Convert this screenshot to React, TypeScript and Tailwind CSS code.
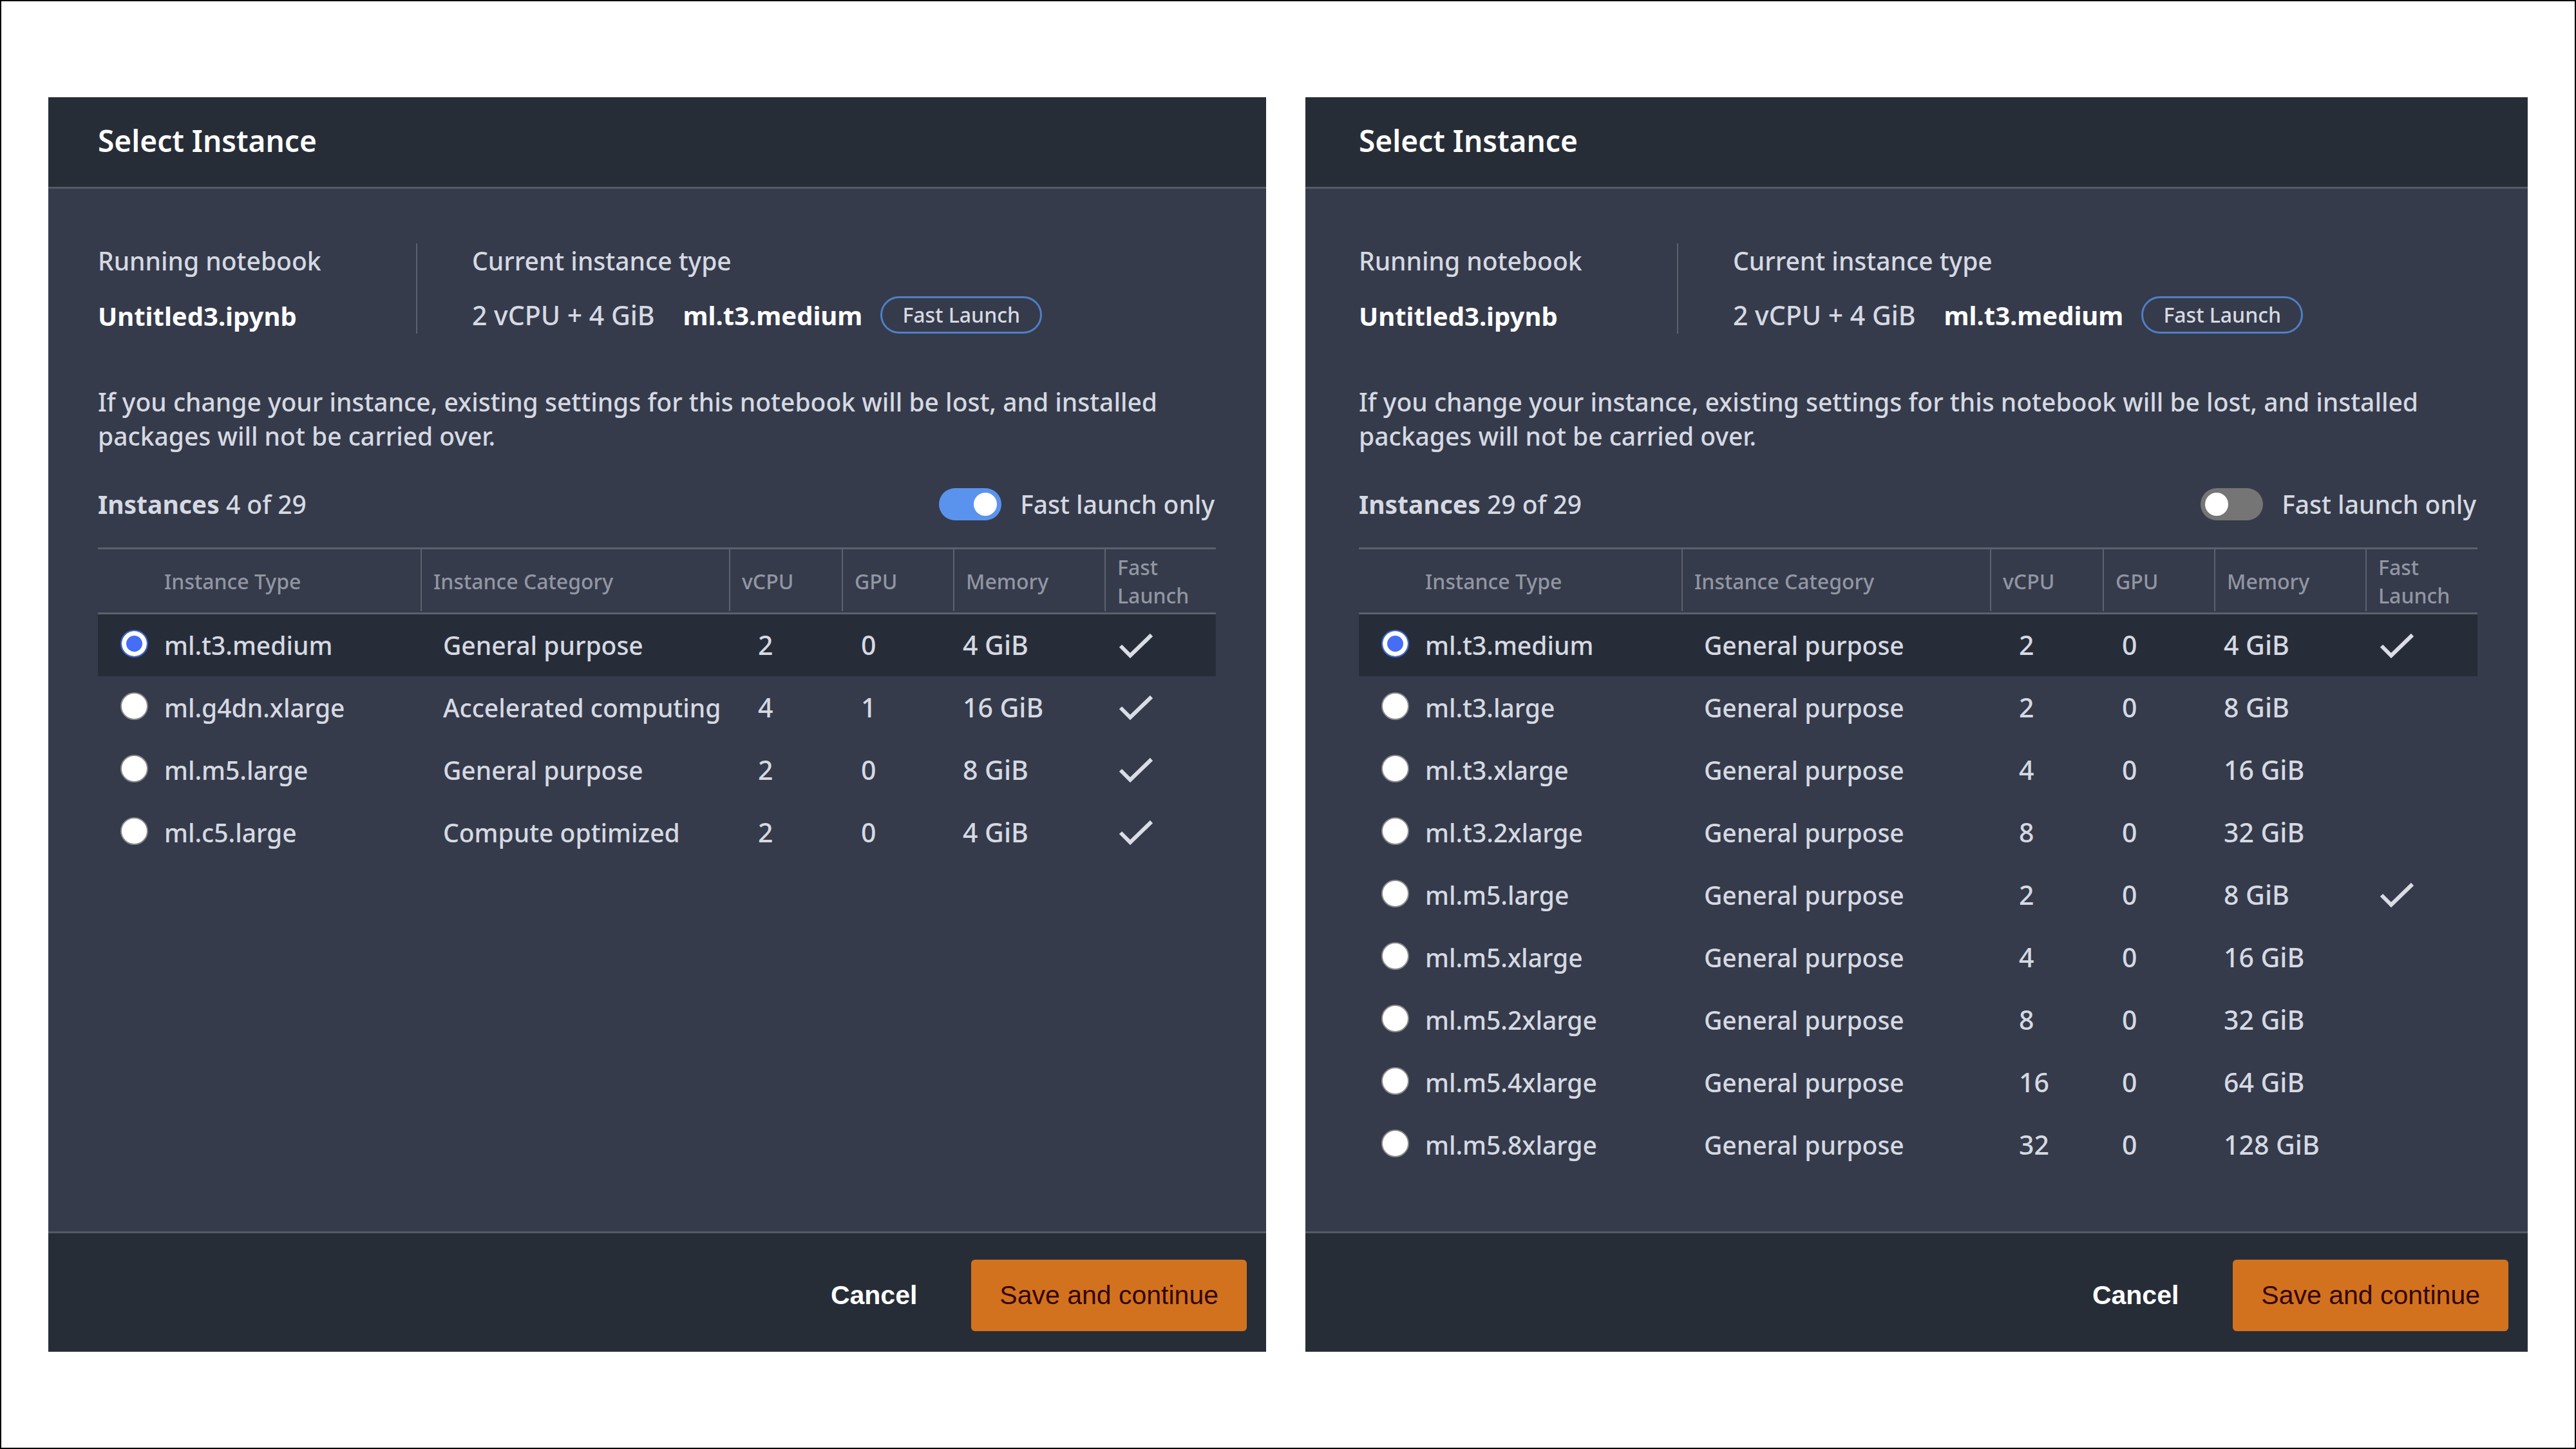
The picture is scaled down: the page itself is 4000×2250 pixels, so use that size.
import { useId, useState } from "react";

type Instance = {
  type: string;
  category: string;
  vcpu: number;
  gpu: number;
  memory: string;
  fast?: boolean;
};

const fastInstances: Instance[] = [
  { type: "ml.t3.medium", category: "General purpose", vcpu: 2, gpu: 0, memory: "4 GiB", fast: true },
  { type: "ml.g4dn.xlarge", category: "Accelerated computing", vcpu: 4, gpu: 1, memory: "16 GiB", fast: true },
  { type: "ml.m5.large", category: "General purpose", vcpu: 2, gpu: 0, memory: "8 GiB", fast: true },
  { type: "ml.c5.large", category: "Compute optimized", vcpu: 2, gpu: 0, memory: "4 GiB", fast: true },
];

const allInstances: Instance[] = [
  { type: "ml.t3.medium", category: "General purpose", vcpu: 2, gpu: 0, memory: "4 GiB", fast: true },
  { type: "ml.t3.large", category: "General purpose", vcpu: 2, gpu: 0, memory: "8 GiB" },
  { type: "ml.t3.xlarge", category: "General purpose", vcpu: 4, gpu: 0, memory: "16 GiB" },
  { type: "ml.t3.2xlarge", category: "General purpose", vcpu: 8, gpu: 0, memory: "32 GiB" },
  { type: "ml.m5.large", category: "General purpose", vcpu: 2, gpu: 0, memory: "8 GiB", fast: true },
  { type: "ml.m5.xlarge", category: "General purpose", vcpu: 4, gpu: 0, memory: "16 GiB" },
  { type: "ml.m5.2xlarge", category: "General purpose", vcpu: 8, gpu: 0, memory: "32 GiB" },
  { type: "ml.m5.4xlarge", category: "General purpose", vcpu: 16, gpu: 0, memory: "64 GiB" },
  { type: "ml.m5.8xlarge", category: "General purpose", vcpu: 32, gpu: 0, memory: "128 GiB" },
];

const headings = ["Instance Category", "vCPU", "GPU", "Memory", "Fast Launch"];

function CheckMark() {
  return (
    <svg className="h-10 w-[54px]" viewBox="0 0 54 40" fill="none" role="img" aria-label="Yes">
      <path d="M3 21 L18 36 L51 4" stroke="#dadde6" strokeWidth="6" />
    </svg>
  );
}

function InstanceTable({ rows }: { rows: Instance[] }) {
  const group = useId();
  const [selected, setSelected] = useState(rows[0].type);

  return (
    <table className="w-full table-fixed border-collapse text-left">
      <colgroup>
        <col className="w-[501px]" />
        <col className="w-[479px]" />
        <col className="w-[175px]" />
        <col className="w-[173px]" />
        <col className="w-[235px]" />
        <col />
      </colgroup>
      <thead className="border-y-3 border-[#5d616c] text-[32px] leading-[44px] text-[#9296a2]">
        <tr>
          <th scope="col" className="p-0 pt-0.5 pl-[103px] font-medium">
            Instance Type
          </th>
          {headings.map((heading) => (
            <th key={heading} scope="col" className="p-0 pb-0.5 font-medium">
              <div className="flex h-24 items-center border-l-2 border-[#5d616c] pt-1 pr-6 pl-[18px]">{heading}</div>
            </th>
          ))}
        </tr>
      </thead>
      <tbody className="text-[39px] leading-[53px] font-medium text-[#d6d9e2]">
        {rows.map((row) => (
          <tr key={row.type} className={row.type === selected ? "h-[97px] bg-[#272d38]" : "h-[97px]"}>
            <td className="p-0 pl-[35px]">
              <label className="flex items-center gap-[25px]">
                <input
                  type="radio"
                  name={group}
                  checked={row.type === selected}
                  onChange={() => setSelected(row.type)}
                  className="mb-1 size-[43px] shrink-0 appearance-none rounded-full border-2 border-[#8b8b8b] bg-white checked:border-[#3f66cf] checked:bg-[#456df5] checked:shadow-[inset_0_0_0_7px_#ffffff]"
                />
                {row.type}
              </label>
            </td>
            <td className="p-0 pl-[35px] whitespace-nowrap">{row.category}</td>
            <td className="p-0 pl-[45px] text-[41px]">{row.vcpu}</td>
            <td className="p-0 pl-[30px] text-[41px]">{row.gpu}</td>
            <td className="p-0 pl-[15px] text-[41px]">{row.memory}</td>
            <td className="p-0 pl-[22px]">{row.fast && <CheckMark />}</td>
          </tr>
        ))}
      </tbody>
    </table>
  );
}

function InstanceDialog({ rows, fastOnly, inset }: { rows: Instance[]; fastOnly: boolean; inset: string }) {
  const [fast, setFast] = useState(fastOnly);

  return (
    <section className="flex flex-col bg-[#353b4b] text-[39px] leading-[53px] font-medium text-[#d6d9e2]">
      <header className={`border-b-3 border-[#565a65] bg-[#272d37] pt-[34px] pb-[39px] ${inset}`}>
        <h2 className="text-[46px] leading-[66px] font-semibold text-white">Select Instance</h2>
      </header>

      <div className={`flex-1 pt-[85px] pr-[78px] ${inset}`}>
        <div className="flex h-[140px]">
          <div className="w-[496px] border-r-2 border-[#5d616c]">
            <div>Running notebook</div>
            <div className="mt-[33px] text-[40px] font-bold text-white">Untitled3.ipynb</div>
          </div>
          <div className="pl-[85px]">
            <div>Current instance type</div>
            <div className="mt-[29px] flex items-center">
              <span className="text-[41px]">2 vCPU + 4 GiB</span>
              <span className="ml-11 text-[40px] font-bold text-white">ml.t3.medium</span>
              <span className="ml-7 rounded-full border-3 border-[#4f7fc4] px-[31px] text-[32px] leading-[52px]">
                Fast Launch
              </span>
            </div>
          </div>
        </div>

        <p className="mt-[79px]">
          If you change your instance, existing settings for this notebook will be lost, and installed packages will
          not be carried over.
        </p>

        <div className="mt-[53px] mb-[41px] flex items-center justify-between">
          <div>
            <span className="font-bold">Instances</span> {rows.length === 4 ? 4 : 29} of 29
          </div>
          <label className="flex items-center gap-[29px] pr-0.5">
            <input
              type="checkbox"
              role="switch"
              checked={fast}
              onChange={() => setFast(!fast)}
              className="h-[50px] w-[97px] appearance-none rounded-full bg-[#757575] p-[7px] before:block before:size-9 before:rounded-full before:bg-white checked:bg-[#5a93ee] checked:before:ml-[47px]"
            />
            Fast launch only
          </label>
        </div>

        <InstanceTable rows={rows} />
      </div>

      <footer className="flex items-center justify-end border-t-3 border-[#565a65] bg-[#272d37] pt-[41px] pr-[30px] pb-8 font-['Liberation_Sans',Arial,sans-serif] text-[41px] leading-[47px]">
        <button type="button" className="mr-[84px] font-bold text-white">
          Cancel
        </button>
        <button type="button" className="rounded-md bg-[#d2721f] px-[44px] py-8 font-normal text-[#330600]">
          Save and continue
        </button>
      </footer>
    </section>
  );
}

export default function App() {
  return (
    <main className="grid min-h-screen grid-cols-[1891fr_1898fr] gap-[61px] border-2 border-black bg-white px-[73px] py-[149px] font-['Noto_Sans','Open_Sans',sans-serif]">
      <InstanceDialog rows={fastInstances} fastOnly inset="pl-[77px]" />
      <InstanceDialog rows={allInstances} fastOnly={false} inset="pl-[83px]" />
    </main>
  );
}
